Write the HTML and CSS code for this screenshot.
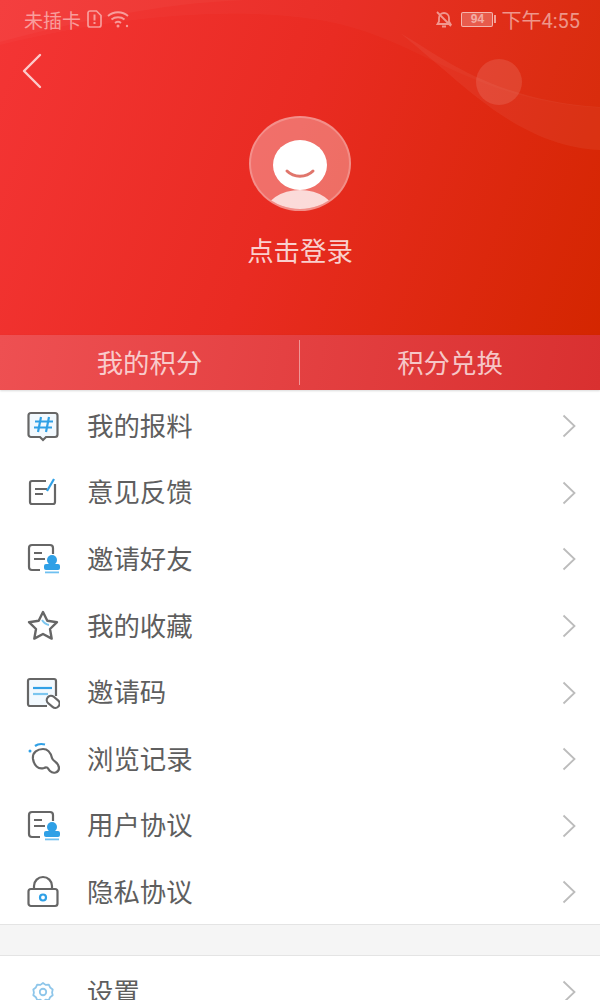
FILE: index.html
```html
<!DOCTYPE html>
<html lang="zh-CN">
<head>
  <meta charset="UTF-8">
  <title>我的</title>
  <link rel="stylesheet" href="styles.css">
</head>
<body>
  <div class="page">
    <header class="hero">
      <!-- wave and bubble behind the header -->
      <svg class="hero-bg" viewBox="0 0 600 335" preserveAspectRatio="none">
        <path d="M0 42 C90 18 190 -4 300 0 L0 0 Z" fill="#fff" fill-opacity="0.03"/>
        <path d="M0 45 C120 15 240 5 330 22 C420 40 470 100 600 108 L600 0 L0 0 Z" fill="#fff" fill-opacity="0.025"/>
        <path d="M400 33 C440 55 490 100 600 107 L600 150 C540 148 490 110 450 75 C430 58 415 45 400 33 Z" fill="#fff" fill-opacity="0.05"/>
        <circle cx="499" cy="82" r="23" fill="#fff" fill-opacity="0.11"/>
      </svg>

      <div class="status">
        <div class="status-side">
          <span>未插卡</span>
          <svg class="ico-sim" viewBox="0 0 15 18"><path d="M3 1h6.500L14 5.500V15a2 2 0 0 1-2 2H3a2 2 0 0 1-2-2V3a2 2 0 0 1 2-2z" fill="none" stroke="currentColor" stroke-width="1.700"/><path d="M7.500 4.500v6M7.500 12v2" stroke="currentColor" stroke-width="2"/></svg>
          <svg class="ico-wifi" viewBox="0 0 22 18"><path d="M1 6c5.500-5 14.500-5 20 0M4.500 9.500c3.500-3 9.500-3 13 0M8 13c1.800-1.400 4.200-1.400 6 0" fill="none" stroke="currentColor" stroke-width="1.900"/><circle cx="11" cy="16" r="1.500" fill="currentColor"/><circle cx="20" cy="16" r="1.200" fill="currentColor"/></svg>
        </div>
        <div class="status-side">
          <svg class="ico-bell" viewBox="0 0 18 18"><path d="M2.500 14h13L14 11.500V8a5 5 0 0 0-10 0v3.500zM7 16.500h4M2 2l14 14" fill="none" stroke="currentColor" stroke-width="1.800"/></svg>
          <span class="battery"><span class="battery-num">94</span></span>
          <span class="battery-tip"></span>
          <span class="time">下午4:55</span>
        </div>
      </div>

      <button class="back">
        <svg viewBox="0 0 20 36"><path d="M18 2 2 18l16 16" fill="none" stroke="currentColor" stroke-width="2.400" stroke-linecap="round" stroke-linejoin="round"/></svg>
      </button>

      <div class="profile">
        <div class="avatar">
          <svg viewBox="0 0 98 91">
            <ellipse cx="49" cy="96" rx="35" ry="24" fill="#fff" fill-opacity="0.75"/>
            <ellipse cx="49" cy="47" rx="27" ry="25" fill="#fff"/>
            <path d="M36 53c7 7 19 7 26 0" fill="none" stroke="#e0766c" stroke-width="3" stroke-linecap="round"/>
          </svg>
        </div>
        <div class="login">点击登录</div>
      </div>
    </header>

    <nav class="tabs">
      <div class="tab">我的积分</div>
      <div class="tab">积分兑换</div>
    </nav>

    <ul class="menu">
      <li class="row">
        <svg class="row-icon" viewBox="0 0 34 34"><path d="M5 4h24a2.500 2.500 0 0 1 2.500 2.500v19a2.500 2.500 0 0 1-2.500 2.500h-9l-3 3-3-3H5a2.500 2.500 0 0 1-2.500-2.500v-19A2.500 2.500 0 0 1 5 4z" fill="#f2f9fe" stroke="#666" stroke-width="2.200"/><path d="M15 8l-3 15M23 8l-3 15M9 12.500h18M8 18.500h18" fill="none" stroke="#2fa0e6" stroke-width="2.200"/></svg>
        <span class="row-label">我的报料</span>
        <svg class="chevron" viewBox="0 0 14 24"><path d="M1.500 1.500 12.500 12 1.500 22.500" fill="none" stroke="currentColor" stroke-width="1.800"/></svg>
      </li>
      <li class="row">
        <svg class="row-icon" viewBox="0 0 34 34"><path d="M20 5H6a2 2 0 0 0-2 2v19a2 2 0 0 0 2 2h21a2 2 0 0 0 2-2V8" fill="none" stroke="#666" stroke-width="2.200"/><path d="M9 13h12M9 18h8" stroke="#666" stroke-width="2"/><path d="M21 15 28 3" stroke="#2fa0e6" stroke-width="2.200"/></svg>
        <span class="row-label">意见反馈</span>
        <svg class="chevron" viewBox="0 0 14 24"><path d="M1.500 1.500 12.500 12 1.500 22.500" fill="none" stroke="currentColor" stroke-width="1.800"/></svg>
      </li>
      <li class="row">
        <svg class="row-icon" viewBox="0 0 34 34"><path d="M14 28H6a3 3 0 0 1-3-3V6a3 3 0 0 1 3-3h18a3 3 0 0 1 3 3v6" fill="none" stroke="#666" stroke-width="2.200"/><path d="M8 11h8M8 17h11" stroke="#666" stroke-width="2"/><circle cx="26" cy="18" r="5" fill="#2fa0e6"/><rect x="18" y="22" width="16" height="6" rx="2" fill="#2fa0e6"/><path d="M19 29.500h14v1.800H19z" fill="#6fc0f0"/></svg>
        <span class="row-label">邀请好友</span>
        <svg class="chevron" viewBox="0 0 14 24"><path d="M1.500 1.500 12.500 12 1.500 22.500" fill="none" stroke="currentColor" stroke-width="1.800"/></svg>
      </li>
      <li class="row">
        <svg class="row-icon" viewBox="0 0 34 34"><path d="M17 3l4.300 8.800 9.700 1.400-7 6.800 1.700 9.600-8.700-4.600-8.700 4.600 1.700-9.600-7-6.800 9.700-1.400z" fill="none" stroke="#666" stroke-width="2.400" stroke-linejoin="round"/><path d="M16 11c2 3 4 4.500 7 5" fill="none" stroke="#7cc6ef" stroke-width="2"/></svg>
        <span class="row-label">我的收藏</span>
        <svg class="chevron" viewBox="0 0 14 24"><path d="M1.500 1.500 12.500 12 1.500 22.500" fill="none" stroke="currentColor" stroke-width="1.800"/></svg>
      </li>
      <li class="row">
        <svg class="row-icon" viewBox="0 0 34 34"><path d="M21 30H4a2 2 0 0 1-2-2V5a2 2 0 0 1 2-2h24a2 2 0 0 1 2 2v15" fill="#f2f9fe" stroke="#666" stroke-width="2.200"/><path d="M7 12h19" stroke="#2fa0e6" stroke-width="2.200"/><path d="M7 18h15" stroke="#7cc6ef" stroke-width="2.200"/><rect x="20" y="21.500" width="14" height="8.500" rx="4.200" transform="rotate(40 27 26)" fill="#fff" stroke="#666" stroke-width="2.200"/></svg>
        <span class="row-label">邀请码</span>
        <svg class="chevron" viewBox="0 0 14 24"><path d="M1.500 1.500 12.500 12 1.500 22.500" fill="none" stroke="currentColor" stroke-width="1.800"/></svg>
      </li>
      <li class="row">
        <svg class="row-icon" viewBox="0 0 34 34"><path d="M7 17C6 10 12 7 17 7c6 0 8 5 9 9 1 4 7 4 7 10 0 5-6 6-9 3-2-2-2-5-6-3-6 2-10-3-11-9z" fill="none" stroke="#666" stroke-width="2.200"/><path d="M9 4c2-1.500 6-2.500 10-1.500" fill="none" stroke="#2fa0e6" stroke-width="2.200"/><circle cx="4" cy="9" r="1.500" fill="#2fa0e6"/></svg>
        <span class="row-label">浏览记录</span>
        <svg class="chevron" viewBox="0 0 14 24"><path d="M1.500 1.500 12.500 12 1.500 22.500" fill="none" stroke="currentColor" stroke-width="1.800"/></svg>
      </li>
      <li class="row">
        <svg class="row-icon" viewBox="0 0 34 34"><path d="M14 28H6a3 3 0 0 1-3-3V6a3 3 0 0 1 3-3h18a3 3 0 0 1 3 3v6" fill="none" stroke="#666" stroke-width="2.200"/><path d="M8 11h8M8 17h11" stroke="#666" stroke-width="2"/><circle cx="26" cy="18" r="5" fill="#2fa0e6"/><rect x="18" y="22" width="16" height="6" rx="2" fill="#2fa0e6"/><path d="M19 29.500h14v1.800H19z" fill="#6fc0f0"/></svg>
        <span class="row-label">用户协议</span>
        <svg class="chevron" viewBox="0 0 14 24"><path d="M1.500 1.500 12.500 12 1.500 22.500" fill="none" stroke="currentColor" stroke-width="1.800"/></svg>
      </li>
      <li class="row">
        <svg class="row-icon" viewBox="0 0 34 34"><rect x="2.500" y="14" width="29" height="17" rx="2.500" fill="none" stroke="#666" stroke-width="2.200"/><path d="M8 14v-3a9 9 0 0 1 18 0v3" fill="none" stroke="#666" stroke-width="2.200"/><circle cx="17" cy="22.500" r="3" fill="none" stroke="#2fa0e6" stroke-width="2.200"/></svg>
        <span class="row-label">隐私协议</span>
        <svg class="chevron" viewBox="0 0 14 24"><path d="M1.500 1.500 12.500 12 1.500 22.500" fill="none" stroke="currentColor" stroke-width="1.800"/></svg>
      </li>
    </ul>

    <div class="spacer"></div>

    <ul class="menu menu-settings">
      <li class="row">
        <svg class="row-icon row-icon-small" viewBox="0 0 34 34"><path d="M17 3l4 3 5-.5 2 4.500 4 3-1 5 1 4-4 3-2 4.500-5-.5-4 3.500-4-3.500-5 .5-2-4.500-4-3 1-4-1-5 4-3 2-4.500 5 .5z" fill="none" stroke="#8ec6ea" stroke-width="2.800" stroke-linejoin="round"/><circle cx="17" cy="17" r="5" fill="none" stroke="#8ec6ea" stroke-width="2.800"/></svg>
        <span class="row-label">设置</span>
        <svg class="chevron" viewBox="0 0 14 24"><path d="M1.500 1.500 12.500 12 1.500 22.500" fill="none" stroke="currentColor" stroke-width="1.800"/></svg>
      </li>
    </ul>
  </div>
</body>
</html>
```

FILE: styles.css
```css
* {
  box-sizing: border-box;
}
body {
  margin: 0;
  background: #fff;
  font-family: "Noto Sans CJK SC", "Liberation Sans", sans-serif;
}
.page {
  width: 600px;
  height: 1000px;
  overflow: hidden;
}
.hero {
  position: relative;
  height: 335px;
  background: linear-gradient(110deg, #f43535 0%, #e92b22 48%, #d42600 100%);
  color: #fff;
}
.hero-bg {
  position: absolute;
  top: 0;
  left: 0;
  width: 100%;
  height: 100%;
}
.status {
  position: relative;
  display: flex;
  justify-content: space-between;
  align-items: center;
  height: 38px;
  padding: 0 20px 0 24px;
  font-size: 19px;
  color: rgba(255, 255, 255, 0.5);
}
.status-side {
  display: flex;
  align-items: center;
}
.ico-sim {
  width: 15px;
  height: 18px;
  margin-left: 6px;
}
.ico-wifi {
  width: 22px;
  height: 18px;
  margin-left: 5px;
}
.ico-bell {
  width: 18px;
  height: 18px;
}
.battery {
  display: flex;
  align-items: center;
  justify-content: center;
  width: 32px;
  height: 15px;
  margin-left: 8px;
  border: 1px solid rgba(255, 255, 255, 0.55);
  border-radius: 2px;
  background: rgba(255, 255, 255, 0.22);
}
.battery-num {
  font-size: 12px;
  font-weight: 700;
  font-family: "Liberation Sans", sans-serif;
  line-height: 1;
}
.battery-tip {
  width: 2px;
  height: 8px;
  margin-left: 1px;
  background: rgba(255, 255, 255, 0.55);
}
.time {
  margin-left: 5px;
  font-size: 20px;
  font-family: "Roboto", "Noto Sans CJK SC", sans-serif;
}
.back {
  position: relative;
  display: block;
  width: 20px;
  height: 36px;
  margin: 15px 0 0 22px;
  padding: 0;
  border: 0;
  background: none;
  color: rgba(255, 255, 255, 0.75);
}
.back svg {
  display: block;
  width: 20px;
  height: 36px;
}
.profile {
  position: relative;
  display: flex;
  flex-direction: column;
  align-items: center;
  margin-top: 27px;
}
.avatar {
  width: 102px;
  height: 95px;
  border-radius: 50%;
  border: 2px solid rgba(255, 255, 255, 0.22);
  background: rgba(255, 255, 255, 0.32);
  overflow: hidden;
}
.avatar svg {
  display: block;
  width: 98px;
  height: 91px;
}
.login {
  margin-top: 20px;
  font-size: 26.4px;
  line-height: 38px;
  color: rgba(255, 255, 255, 0.78);
}
.tabs {
  display: grid;
  grid-template-columns: 299px 1fr;
  height: 55px;
  padding: 5px 0;
  background: linear-gradient(100deg, #ee5052 0%, #d93030 100%);
  box-shadow: 0 1px 2px rgba(0, 0, 0, 0.15);
  position: relative;
  font-size: 26.4px;
  color: rgba(255, 255, 255, 0.72);
}
.tab {
  display: flex;
  align-items: center;
  justify-content: center;
  padding-bottom: 3px;
}
.tab + .tab {
  border-left: 1px solid rgba(255, 255, 255, 0.45);
}
.menu {
  margin: 0;
  padding: 3px 0 0;
  list-style: none;
}
.row {
  display: flex;
  align-items: center;
  height: 66.6px;
  padding: 0 24px 0 26px;
}
.row-icon {
  flex: none;
  width: 34px;
  height: 34px;
}
.row-icon-small {
  width: 22px;
  height: 22px;
  margin: 0 6px;
}
.row-label {
  flex: 1;
  margin: 0 0 4px 27px;
  font-size: 26.4px;
  color: #5e5e5e;
}
.chevron {
  flex: none;
  width: 14px;
  height: 24px;
  color: #bcbcbc;
}
.spacer {
  height: 32px;
  margin-top: -2px;
  background: #f5f5f5;
  border-top: 1px solid #e4e4e4;
  border-bottom: 1px solid #e4e4e4;
}
.menu-settings {
  padding-top: 3px;
}
```
